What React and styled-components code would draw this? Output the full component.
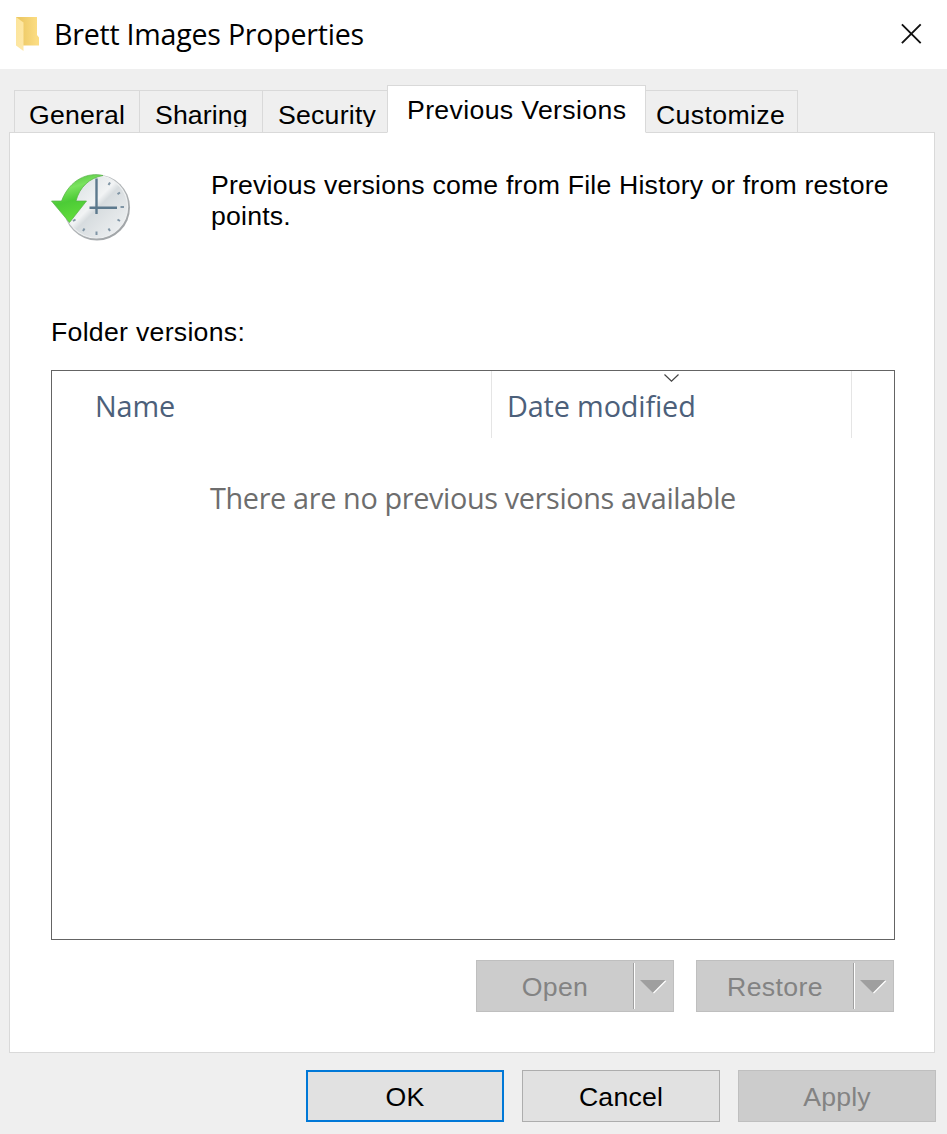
import { useState } from "react";
import styled, { createGlobalStyle } from "styled-components";

const tabs = [
  { name: "General", width: 126, indent: 14, spacing: 0.18 },
  { name: "Sharing", width: 124, indent: 15, spacing: 0.1 },
  { name: "Security", width: 126, indent: 15, spacing: 0.22 },
  { name: "Previous Versions", width: 259, indent: 19, spacing: 0.35 },
  { name: "Customize", width: 153, indent: 10, spacing: 0.35 },
];

const FolderIcon = () => (
  <svg width="26" height="36" viewBox="0 0 26 36">
    <defs>
      <linearGradient id="folderBack" x1="0" y1="0" x2="1" y2="0">
        <stop offset="0.2" stopColor="#edc965" />
        <stop offset="0.9" stopColor="#fbdc82" />
      </linearGradient>
      <linearGradient id="folderFront" x1="0" y1="0" x2="1" y2="1">
        <stop offset="0" stopColor="#fce49a" />
        <stop offset="1" stopColor="#fee8a8" />
      </linearGradient>
    </defs>
    <path d="M1 1H22V19L24 21.5V29.5H8L1 20Z" fill="url(#folderBack)" />
    <path d="M1 1L8.5 6.5V35L1 29.5Z" fill="url(#folderFront)" />
  </svg>
);

const CloseIcon = () => (
  <svg width="22" height="22" viewBox="0 0 22 22">
    <path d="M1.9 1.4L20.7 20.2M20.7 1.4L1.9 20.2" stroke="#111" strokeWidth="1.9" />
  </svg>
);

const HistoryIcon = () => (
  <svg width="84" height="74" viewBox="0 0 84 74">
    <defs>
      <linearGradient id="face" x1="0" y1="0" x2="1" y2="1">
        <stop offset="0" stopColor="#d3dadd" />
        <stop offset="0.45" stopColor="#f1f3f4" />
        <stop offset="0.52" stopColor="#d7dcdf" />
        <stop offset="1" stopColor="#f3f5f6" />
      </linearGradient>
      <linearGradient id="rim" x1="0" y1="0" x2="1" y2="1">
        <stop offset="0" stopColor="#c9cdcf" />
        <stop offset="1" stopColor="#9a9ea1" />
      </linearGradient>
      <linearGradient id="arrow" x1="0" y1="0" x2="0.3" y2="1">
        <stop offset="0" stopColor="#45b535" />
        <stop offset="0.35" stopColor="#7be35f" />
        <stop offset="0.6" stopColor="#4ccb36" />
        <stop offset="1" stopColor="#62de3c" />
      </linearGradient>
    </defs>
    <circle cx="46" cy="34.5" r="33" fill="url(#rim)" />
    <circle cx="45.4" cy="33.8" r="31.2" fill="url(#face)" stroke="#eef0f1" strokeWidth="1.2" />
    <path
      d="M57.5 12.1L59 9.5M66.5 21.1L69 19.5M69.5 34H73M66.5 46.5L69 48M57.5 55.5L59 58.1M45.5 58.5V62M33.5 55.5L32 58.1M24.5 46.5L22 48M33.5 12.1L32 9.5"
      stroke="#8095a5"
      strokeWidth="2"
    />
    <path d="M45.5 5.5V41M38.5 34.8H66" stroke="#5c798d" strokeWidth="2.4" />
    <path
      d="M52 2.5C37 -1 19 6 10.5 28H0.5L18.5 49.5L35.5 28H25C28.5 14.5 38 5 52 2.5Z"
      fill="url(#arrow)"
      stroke="#55b145"
      strokeWidth="0.7"
    />
  </svg>
);

const SortIcon = () => (
  <svg width="16" height="9" viewBox="0 0 16 9">
    <path d="M0.5 0.5L7.5 7.2L14.5 0.5" fill="none" stroke="#444" strokeWidth="1.2" />
  </svg>
);

const DropIcon = () => (
  <svg width="28" height="16" viewBox="0 0 28 16">
    <path d="M13.4 13.9L25.6 1.7" stroke="#fff" strokeWidth="1.6" />
    <path d="M0 1H25.5L12.8 13.7Z" fill="#9f9f9f" />
  </svg>
);

const SplitButton = ({ children }) => (
  <Split>
    <SplitLabel disabled>{children}</SplitLabel>
    <SplitArrow disabled aria-label={`${children} options`}>
      <DropIcon />
    </SplitArrow>
  </Split>
);

const App = () => {
  const [activeTab, setActiveTab] = useState("Previous Versions");

  return (
    <Dialog>
      <GlobalStyle />
      <TitleBar>
        <FolderIcon />
        <Title>Brett Images Properties</Title>
        <CloseButton aria-label="Close">
          <CloseIcon />
        </CloseButton>
      </TitleBar>

      <TabRow>
        {tabs.map((tab) => (
          <Tab
            key={tab.name}
            $active={tab.name === activeTab}
            $width={tab.width}
            $indent={tab.indent}
            $spacing={tab.spacing}
            onClick={() => setActiveTab(tab.name)}
          >
            <TabText>{tab.name}</TabText>
          </Tab>
        ))}
      </TabRow>

      <Panel>
        <Intro>
          <HistoryIcon />
          <IntroText>
            Previous versions come from File History or from restore points.
          </IntroText>
        </Intro>
        <ListLabel>Folder versions:</ListLabel>
        <VersionList>
          <ListHeader>
            <NameColumn>Name</NameColumn>
            <DateColumn>
              <SortIcon />
              <span>Date modified</span>
            </DateColumn>
          </ListHeader>
          <EmptyText>There are no previous versions available</EmptyText>
        </VersionList>
        <PanelActions>
          <SplitButton>Open</SplitButton>
          <SplitButton>Restore</SplitButton>
        </PanelActions>
      </Panel>

      <Footer>
        <Button $primary>OK</Button>
        <Button>Cancel</Button>
        <Button disabled>Apply</Button>
      </Footer>
    </Dialog>
  );
};

export default App;

const GlobalStyle = createGlobalStyle`
  * {
    box-sizing: border-box;
  }

  body {
    margin: 0;
    background: #efefef;
  }

  svg {
    display: block;
    flex: none;
  }

  button {
    font: inherit;
    letter-spacing: inherit;
    color: inherit;
  }

  p {
    margin: 0;
  }
`;

const Dialog = styled.div`
  width: 947px;
  height: 1134px;
  display: flex;
  flex-direction: column;
  overflow: hidden;
  background: #efefef;
  color: #000;
  font-family: "Liberation Sans", Arial, sans-serif;
  font-size: 26.67px;
  letter-spacing: 0.2px;
`;

const TitleBar = styled.header`
  height: 69px;
  flex: none;
  display: flex;
  align-items: center;
  padding: 0 25px 2px 15px;
  background: #fff;
`;

const Title = styled.h1`
  flex: 1;
  margin: 1px 0 0 13px;
  font-family: "Open Sans", "Noto Sans", sans-serif;
  font-size: 28.6px;
  font-weight: 400;
  letter-spacing: -0.24px;
  line-height: 40px;
`;

const CloseButton = styled.button`
  padding: 0;
  border: none;
  background: none;
`;

const TabRow = styled.nav`
  height: 64px;
  flex: none;
  display: flex;
  align-items: flex-end;
  padding-left: 14px;
`;

const Tab = styled.button`
  position: relative;
  z-index: ${(props) => (props.$active ? 1 : 0)};
  width: ${(props) => props.$width}px;
  height: ${(props) => (props.$active ? 48 : 43)}px;
  margin-right: -1px;
  padding: 0 0 0 ${(props) => props.$indent}px;
  display: flex;
  align-items: flex-start;
  border: 1px solid #d9d9d9;
  border-bottom-color: ${(props) => (props.$active ? "#fff" : "#d9d9d9")};
  background: ${(props) => (props.$active ? "#fff" : "#efefef")};
  letter-spacing: ${(props) => props.$spacing}px;
`;

const TabText = styled.span`
  height: 36px;
  line-height: 48px;
  overflow: hidden;
  white-space: nowrap;
`;

const Panel = styled.main`
  width: 926px;
  height: 921px;
  flex: none;
  margin: -1px 0 0 9px;
  padding: 37px 39px 0 41px;
  display: flex;
  flex-direction: column;
  border: 1px solid #d9d9d9;
  background: #fff;
`;

const Intro = styled.section`
  height: 147px;
  display: flex;
  align-items: flex-start;

  svg {
    margin-top: 3px;
  }
`;

const IntroText = styled.p`
  width: 690px;
  margin-left: 76px;
  line-height: 31px;
`;

const ListLabel = styled.p`
  height: 53px;
  line-height: 31px;
  letter-spacing: 0.28px;
`;

const VersionList = styled.section`
  width: 844px;
  height: 570px;
  border: 1px solid #646464;
  font-family: "Open Sans", "Noto Sans", sans-serif;
  font-size: 28.8px;
  letter-spacing: -0.14px;
`;

const ListHeader = styled.div`
  height: 67px;
  display: flex;
  color: #4c607a;
  line-height: 40px;
`;

const NameColumn = styled.div`
  width: 440px;
  padding: 15px 0 0 43px;
  border-right: 1px solid #e5e5e5;
`;

const DateColumn = styled.div`
  width: 360px;
  padding: 3px 0 0 15px;
  border-right: 1px solid #e5e5e5;

  svg {
    margin: 0 auto 3px 157px;
  }
`;

const EmptyText = styled.p`
  margin-top: 40px;
  color: #6d6d6d;
  line-height: 40px;
  letter-spacing: -0.35px;
  text-align: center;
`;

const PanelActions = styled.div`
  display: flex;
  justify-content: flex-end;
  gap: 22px;
  margin: 20px 1px 0 0;
`;

const Split = styled.div`
  width: 198px;
  height: 52px;
  display: flex;
  align-items: center;
  border: 1px solid #bfbfbf;
  background: #ccc;
  color: #838383;
`;

const SplitLabel = styled.button`
  flex: 1;
  padding: 2px 0 0;
  border: none;
  background: none;
  letter-spacing: 0.35px;
`;

const SplitArrow = styled.button`
  width: 40px;
  height: 46px;
  padding: 2px 0 0 6px;
  border: none;
  border-left: 1px solid #a0a0a0;
  box-shadow: inset 1px 0 #fff;
  background: none;
`;

const Footer = styled.footer`
  display: flex;
  justify-content: flex-end;
  gap: 18px;
  margin: 17px 11px 0 0;
`;

const Button = styled.button`
  width: 198px;
  height: 52px;
  padding: 2px 0 0;
  border: ${(props) => (props.$primary ? "2px solid #0078d7" : "1px solid #adadad")};
  background: #e1e1e1;
  color: #000;

  &:disabled {
    border-color: #bfbfbf;
    background: #ccc;
    color: #838383;
  }
`;
